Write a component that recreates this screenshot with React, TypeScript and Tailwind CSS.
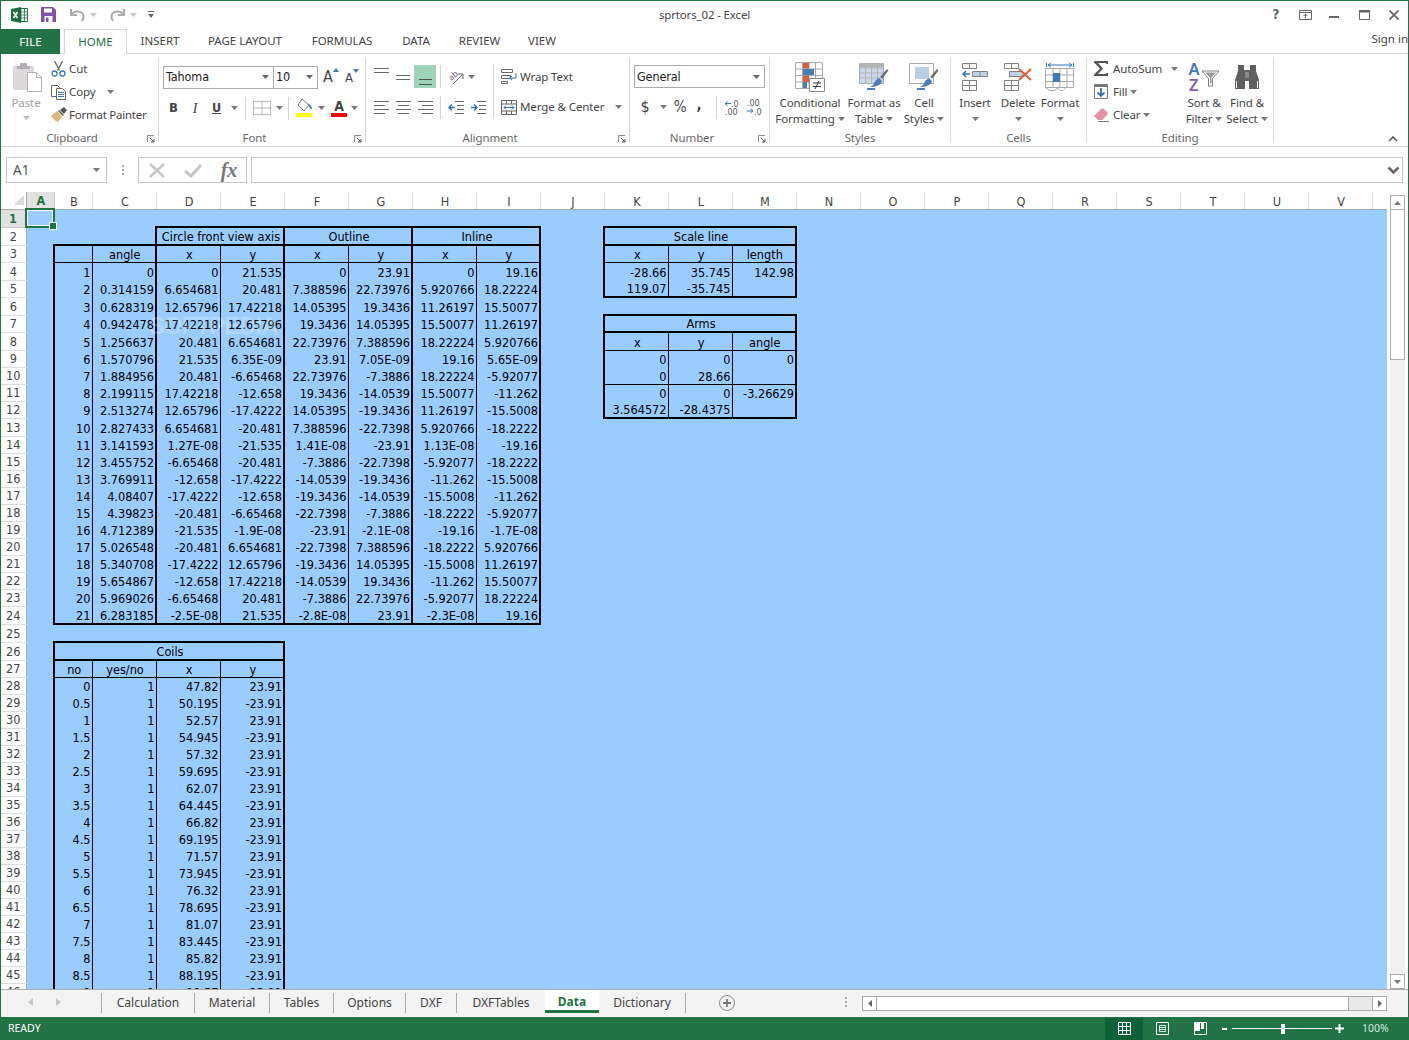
import React from 'react';

const COLS = ['A','B','C','D','E','F','G','H','I','J','K','L','M','N','O','P','Q','R','S','T','U','V','W'];
const HEIGHTS = [18,18,17,18,17,18,17,18,17,17,17,17,18,17,17,17,17,17,17,17,17,17,17,18,18,18,17,17,17,17,17,17,17,17,17,17,17,17,17,17,17,17,17,17,17,17];

type B = 0 | 1 | 2;
type Cell = { text?: string; span?: number; center?: boolean; t?: B; r?: B; b?: B; l?: B };
const cells: Record<string, Cell> = {};
const set = (c: string, r: number, v: Cell) => { cells[c + r] = v; };

const circle = `1|0|0|21.535|0|23.91|0|19.16
2|0.314159|6.654681|20.481|7.388596|22.73976|5.920766|18.22224
3|0.628319|12.65796|17.42218|14.05395|19.3436|11.26197|15.50077
4|0.942478|17.42218|12.65796|19.3436|14.05395|15.50077|11.26197
5|1.256637|20.481|6.654681|22.73976|7.388596|18.22224|5.920766
6|1.570796|21.535|6.35E-09|23.91|7.05E-09|19.16|5.65E-09
7|1.884956|20.481|-6.65468|22.73976|-7.3886|18.22224|-5.92077
8|2.199115|17.42218|-12.658|19.3436|-14.0539|15.50077|-11.262
9|2.513274|12.65796|-17.4222|14.05395|-19.3436|11.26197|-15.5008
10|2.827433|6.654681|-20.481|7.388596|-22.7398|5.920766|-18.2222
11|3.141593|1.27E-08|-21.535|1.41E-08|-23.91|1.13E-08|-19.16
12|3.455752|-6.65468|-20.481|-7.3886|-22.7398|-5.92077|-18.2222
13|3.769911|-12.658|-17.4222|-14.0539|-19.3436|-11.262|-15.5008
14|4.08407|-17.4222|-12.658|-19.3436|-14.0539|-15.5008|-11.262
15|4.39823|-20.481|-6.65468|-22.7398|-7.3886|-18.2222|-5.92077
16|4.712389|-21.535|-1.9E-08|-23.91|-2.1E-08|-19.16|-1.7E-08
17|5.026548|-20.481|6.654681|-22.7398|7.388596|-18.2222|5.920766
18|5.340708|-17.4222|12.65796|-19.3436|14.05395|-15.5008|11.26197
19|5.654867|-12.658|17.42218|-14.0539|19.3436|-11.262|15.50077
20|5.969026|-6.65468|20.481|-7.3886|22.73976|-5.92077|18.22224
21|6.283185|-2.5E-08|21.535|-2.8E-08|23.91|-2.3E-08|19.16`.split('\n').map(l => l.split('|'));

const T1 = ['B','C','D','E','F','G','H','I'];
const rightOf: Record<string, B> = { B: 1, C: 2, D: 1, E: 2, F: 1, G: 2, H: 1, I: 2 };
set('D', 2, { text: 'Circle front view axis', span: 2, center: true, t: 2, r: 2, b: 2, l: 2 });
set('F', 2, { text: 'Outline', span: 2, center: true, t: 2, r: 2, b: 2 });
set('H', 2, { text: 'Inline', span: 2, center: true, t: 2, r: 2, b: 2 });
['', 'angle', 'x', 'y', 'x', 'y', 'x', 'y'].forEach((h, i) => {
  const c = T1[i];
  set(c, 3, { text: h, center: true, t: 2, b: 1, r: rightOf[c], l: c === 'B' ? 2 : 0 });
});
circle.forEach((row, ri) => {
  row.forEach((v, i) => {
    const c = T1[i];
    set(c, 4 + ri, { text: v, r: rightOf[c], l: c === 'B' ? 2 : 0, b: ri === 20 ? 2 : 0 });
  });
});

set('B', 26, { text: 'Coils', span: 4, center: true, t: 2, b: 2, l: 2, r: 2 });
['no', 'yes/no', 'x', 'y'].forEach((h, i) => {
  const c = ['B', 'C', 'D', 'E'][i];
  set(c, 27, { text: h, center: true, b: 1, l: i === 0 ? 2 : 0, r: i === 3 ? 2 : 1 });
});
for (let k = 0; k <= 18; k++) {
  const r = 28 + k;
  const vals = [String(k / 2), '1', String(+(47.82 + 2.375 * k).toFixed(3)), k % 2 ? '-23.91' : '23.91'];
  vals.forEach((v, i) => {
    const c = ['B', 'C', 'D', 'E'][i];
    set(c, r, { text: v, l: i === 0 ? 2 : 0, r: i === 3 ? 2 : 1 });
  });
}

const small = (top: number, title: string, heads: string[], rows: string[][], thinAfter: number[]) => {
  set('K', top, { text: title, span: 3, center: true, t: 2, b: 2, l: 2, r: 2 });
  const cs = ['K', 'L', 'M'];
  heads.forEach((h, i) => set(cs[i], top + 1, { text: h, center: true, b: 1, l: i === 0 ? 2 : 0, r: i === 2 ? 2 : 1 }));
  rows.forEach((row, ri) => row.forEach((v, i) => set(cs[i], top + 2 + ri, {
    text: v,
    l: i === 0 ? 2 : 0,
    r: i === 2 ? 2 : 1,
    b: ri === rows.length - 1 ? 2 : thinAfter.includes(ri) ? 1 : 0,
  })));
};
small(2, 'Scale line', ['x', 'y', 'length'], [['-28.66', '35.745', '142.98'], ['119.07', '-35.745', '']], []);
small(7, 'Arms', ['x', 'y', 'angle'], [['0', '0', '0'], ['0', '28.66', ''], ['0', '0', '-3.26629'], ['3.564572', '-28.4375', '']], [1]);

const BT = { 0: '', 1: 'border-t border-t-black', 2: 'border-t-2 border-t-black' };
const BR = { 0: '', 1: 'border-r border-r-black', 2: 'border-r-2 border-r-black' };
const BB = { 0: '', 1: 'border-b border-b-black', 2: 'border-b-2 border-b-black' };
const BL = { 0: '', 1: 'border-l border-l-black', 2: 'border-l-2 border-l-black' };

const UI = "font-['Noto_Sans',sans-serif]";
const SHEET = "font-['DejaVu_Sans_Condensed','DejaVu_Sans',sans-serif]";

const Caret = ({ c = '#777' }: { c?: string }) => (
  <svg width="7" height="4" viewBox="0 0 7 4" className="shrink-0"><path d="M0 0h7L3.5 4z" fill={c} /></svg>
);

const Lines = ({ w = 15, h = 16, ys, c = '#666' }: { w?: number; h?: number; ys: [number, number, number][]; c?: string }) => (
  <svg width={w} height={h} viewBox={`0 0 ${w} ${h}`}>
    {ys.map(([x1, x2, y], i) => <path key={i} d={`M${x1} ${y + 0.5}H${x2}`} stroke={c} />)}
  </svg>
);

const Launcher = () => (
  <svg width="8" height="8" viewBox="0 0 8 8" className="shrink-0">
    <path d="M.5 7V.5H7" stroke="#8a8a8a" fill="none" />
    <path d="M3 3l4 4M7 4v3H4" stroke="#555" fill="none" />
  </svg>
);

function Group({ w, label, launcher, children }: { w: string; label: string; launcher?: boolean; children: React.ReactNode }) {
  return (
    <div className={`${w} h-[84px] mt-[4px] border-r border-[#d4d4d4] flex flex-col shrink-0`}>
      <div className="h-[74px] flex">{children}</div>
      <div className={`h-[10px] flex text-[11.5px] tracking-[-0.1px] leading-[12px] text-[#666] ${launcher ? 'pr-[3px]' : ''}`}>
        <div className={`flex-1 text-center ${launcher ? 'pr-[4px]' : ''}`}>{label}</div>
        {launcher && <div className="pt-[3px]"><Launcher /></div>}
      </div>
    </div>
  );
}

const Combo = ({ w, text, cls = '' }: { w: string; text: string; cls?: string }) => (
  <div className={`${w} h-[23px] border border-[#ababab] bg-white flex items-center justify-between pl-[2px] pr-[4px] ${cls}`}>
    <span className={`${SHEET} pt-[1px] text-[12.5px] text-[#222]`}>{text}</span>
    <Caret c="#666" />
  </div>
);

const Slot = ({ w, children, cls = '' }: { w: string; children?: React.ReactNode; cls?: string }) => (
  <span className={`${w} h-full flex items-center justify-center shrink-0 ${cls}`}>{children}</span>
);

const Sep = ({ cls = 'h-[23px]' }: { cls?: string }) => <span className={`w-px ${cls} bg-[#d4d4d4] shrink-0`} />;

const Big = ({ w, icon, l1, l2, caret }: { w: string; icon: React.ReactNode; l1: string; l2?: string; caret?: boolean }) => (
  <div className={`${w} flex flex-col items-center pt-[4px] shrink-0`}>
    <div className="h-[30px] flex items-center justify-center">{icon}</div>
    <div className="mt-[3px] h-[16px] leading-[16px] whitespace-nowrap">{l1}</div>
    {l2 ? (
      <div className="h-[16px] leading-[16px] whitespace-nowrap flex items-center gap-[3px]">{l2}{caret && <Caret />}</div>
    ) : (
      <div className="h-[16px] flex items-center"><Caret /></div>
    )}
  </div>
);

const CondIcon = () => (
  <svg width="30" height="30" viewBox="0 0 30 30">
    <path d="M.5.5h27v26H.5zM.5 7h27M.5 13.5h27M.5 20h27M7.5.5v26M14 .5v26M20.5.5v26" fill="#fff" stroke="#a9a9a9" />
    <path d="M8 1h6v5.5H8zM8 13.5h6V20H8z" fill="#d8603f" />
    <path d="M8 7h11v6H8zM8 20h4v6H8z" fill="#4a7ebb" />
    <path d="M14.5 16.5h15v13h-15z" fill="#fff" stroke="#8a8a8a" />
    <path d="M18 21h8M18 24.5h8M24 19l-4 8" stroke="#333" fill="none" />
  </svg>
);
const TableBrush = ({ full }: { full?: boolean }) => (
  <svg width="30" height="30" viewBox="0 0 30 30">
    {full ? (
      <>
        <path d="M.5 1.5h24v20H.5z" fill="#fff" stroke="#a9a9a9" />
        <path d="M6 5h14v12H6z" fill="#b9cde5" />
      </>
    ) : (
      <>
        <path d="M.5 1.5h24v20H.5z" fill="#c9d8ea" stroke="#a9a9a9" />
        <path d="M1 1.5h23v4H1z" fill="#b4b4b4" />
        <path d="M.5 6h24M.5 11h24M.5 16h24M6.5 1.5v20M12.5 1.5v20M18.5 1.5v20" stroke="#b5b5b5" />
      </>
    )}
    <path d="M21 15l7-8 1.500 1.500-6 8z" fill="#707070" />
    <path d="M16 19l4-3 3 3c-1 4-6 6-12 6 3-1 4-3 5-6z" fill="#4a7ebb" />
    <path d="M8 27h8" stroke="#4a7ebb" strokeWidth="2" />
  </svg>
);
const InsertIcon = () => (
  <svg width="28" height="30" viewBox="0 0 28 30">
    <path d="M1.500 1.500h14v5h-14zM8.500 1.500v5M1.500 18.500h14v10h-14zM1.500 23.500h14M8.500 18.500v10" fill="#fff" stroke="#808080" />
    <path d="M11.500 9.500h15v5h-15z" fill="#c0d2e8" stroke="#808080" />
    <path d="M19 9.500v5" stroke="#808080" />
    <path d="M9 12H2M5 9l-3 3 3 3" stroke="#2f75b5" strokeWidth="1.500" fill="none" />
  </svg>
);
const DeleteIcon = () => (
  <svg width="30" height="30" viewBox="0 0 30 30">
    <path d="M1.500 1.500h14v5h-14zM8.500 1.500v5M1.500 18.500h14v10h-14zM1.500 23.500h14M8.500 18.500v10" fill="#fff" stroke="#808080" />
    <path d="M6.500 9.500h12l3 2.500-3 2.500h-12z" fill="#c0d2e8" stroke="#808080" />
    <path d="M16 7l12 11M28 7L16 18" stroke="#e0623f" strokeWidth="2.200" />
  </svg>
);
const FormatIcon = () => (
  <svg width="30" height="30" viewBox="0 0 30 30">
    <path d="M1.500 1v4M28.500 1v4M3 3h24" stroke="#2f75b5" fill="none" />
    <path d="M6 1L3 3l3 2M24 1l3 2-3 2" stroke="#2f75b5" fill="none" />
    <path d="M.5 6.500h28v19H.5zM.5 13h28M.5 19.500h28M8 6.500v19M15 6.500v19M22 6.500v19" fill="#fff" stroke="#a9a9a9" />
    <path d="M8 11h7v9H8z" fill="#3f7ab8" />
    <path d="M.5 25.500l4 3h6l2-3M12 25.500l3 3h3l3-3" fill="none" stroke="#a9a9a9" />
  </svg>
);
const SortIcon = () => (
  <svg width="31" height="28" viewBox="0 0 31 28" className="overflow-visible">
    <text x="-.5" y="12" fontSize="16.500" fontFamily="Noto Sans" fontWeight="600" fill="#3f7ab8">A</text>
    <text x="0" y="27.500" fontSize="16.500" fontFamily="Noto Sans" fontWeight="600" fill="#8a5bb5">Z</text>
    <path d="M13 8h17l-6.500 7.500V23h-4v-7.500z" fill="#fff" stroke="#7f7f7f" />
    <path d="M16 9.500h11l-4.500 5v6h-1.500v-6z" fill="#9a9a9a" />
  </svg>
);
const Binoculars = () => (
  <svg width="28" height="26" viewBox="0 0 28 26">
    <path d="M5 1h6v5h6V1h6v6l3 9v9h-10v-8h-4v8H2v-9l3-9z" fill="#5f5f5f" />
    <path d="M3.500 17v7M24.500 17v7" stroke="#fff" />
    <path d="M12 8h4v6h-4z" fill="#888" />
  </svg>
);

const Ribbon = () => (
  <div className="h-[93px] border-b border-[#d4d4d4] flex text-[11.5px] tracking-[-0.1px] text-[#444] shrink-0">
    <Group w="w-[158px]" label="Clipboard" launcher>
      <div className="w-[50px] flex flex-col items-center pt-[4px] text-[#a0a0a0]">
        <svg width="30" height="30" viewBox="0 0 30 30" className="ml-[4px]">
          <rect x="0" y="4" width="21" height="24" rx="2" fill="#dcd8dc" />
          <path d="M7 4V1h7v3h3v3H4V4z" fill="#b3aeb3" />
          <path d="M14.500 10.500h9l5 5v14h-14z" fill="#fff" stroke="#b0b0b0" />
          <path d="M23.500 10.500v5h5" fill="none" stroke="#b0b0b0" />
        </svg>
        <div className="mt-[3px] h-[16px] leading-[16px]">Paste</div>
        <div className="mt-[5px]"><Caret c="#bbb" /></div>
      </div>
      <div className="-mt-px flex flex-col">
        <div className="h-[23px] flex items-center gap-[3px]">
          <svg width="15" height="16" viewBox="0 0 15 16">
            <path d="M3.500 0l5 9.500M11.500 0l-5 9.500" stroke="#666" strokeWidth="1.300" />
            <circle cx="3.500" cy="12.500" r="2.500" fill="none" stroke="#3f7ab8" strokeWidth="1.300" />
            <circle cx="11.500" cy="12.500" r="2.500" fill="none" stroke="#3f7ab8" strokeWidth="1.300" />
          </svg>
          <span>Cut</span>
        </div>
        <div className="h-[23px] flex items-center gap-[3px]">
          <svg width="15" height="16" viewBox="0 0 15 16">
            <path d="M.5 1.500h6l2 2v9h-8z" fill="#fff" stroke="#666" />
            <path d="M5.500 4.500h6l3 3v8h-9z" fill="#fff" stroke="#666" />
            <path d="M7 8.500h6M7 10.500h6M7 12.500h6" stroke="#3f7ab8" />
          </svg>
          <span>Copy</span>
          <span className="ml-[8px]"><Caret /></span>
        </div>
        <div className="h-[23px] flex items-center gap-[2px]">
          <svg width="16" height="16" viewBox="0 0 16 16">
            <path d="M0 9l6-5 5 5-4 6c-3-1-5-3-7-6z" fill="#dcb67a" />
            <path d="M7 4l1-1 5 5-1 1zM9 3l4-3 3 3-3 4z" fill="#555" />
          </svg>
          <span className="tracking-[-0.25px]">Format Painter</span>
        </div>
      </div>
    </Group>

    <Group w="w-[207px]" label="Font" launcher>
      <div className="pl-[4px] pt-[7px] flex flex-col">
        <div className="flex items-center">
          <Combo w="w-[111px]" text="Tahoma" />
          <Combo w="w-[44px]" text="10" cls="border-l-0" />
          <span className="w-[5px]" />
          <span className={`${SHEET} w-[22px] flex items-start text-[16px] text-[#444]`}>A<svg width="6" height="4" viewBox="0 0 6 4" className="mt-[3px]"><path d="M3 0l3 4H0z" fill="#3f7ab8" /></svg></span>
          <span className={`${SHEET} w-[18px] flex items-start text-[13px] pt-[2px] text-[#444]`}>A<svg width="6" height="4" viewBox="0 0 6 4" className="mt-[1px]"><path d="M0 0h6L3 4z" fill="#3f7ab8" /></svg></span>
        </div>
        <div className="mt-[7px] h-[24px] flex items-center text-[#444]">
          <Slot w="w-[21px]"><span className={`${SHEET} font-bold text-[13px]`}>B</span></Slot>
          <Slot w="w-[22px]"><span className="font-['Liberation_Serif',serif] italic text-[14px]">I</span></Slot>
          <Slot w="w-[21px]"><span className={`${SHEET} font-bold text-[12.5px] underline`}>U</span></Slot>
          <Slot w="w-[14px]"><Caret /></Slot>
          <span className="w-[4px]" />
          <Sep />
          <span className="w-[7px]" />
          <svg width="18" height="14" viewBox="0 0 18 14">
            <path d="M.5.5h17v13H.5z" fill="none" stroke="#777" strokeDasharray="1 1" />
            <path d="M9 .5v13M.5 7h17" stroke="#777" strokeDasharray="1 1" />
          </svg>
          <Slot w="w-[17px]"><Caret /></Slot>
          <Sep />
          <span className="w-[7px]" />
          <svg width="17" height="18" viewBox="0 0 17 18">
            <path d="M6 0l7 6-5 6-6-6z" fill="#fff" stroke="#777" />
            <path d="M13 5c2 1 3 3 3 5-2 0-3-1-3-5z" fill="#3f7ab8" />
            <path d="M0 14h16v4H0z" fill="#ffff00" />
          </svg>
          <Slot w="w-[17px]"><Caret /></Slot>
          <span className="w-[1px]" />
          <span className="w-[16px] flex flex-col items-center">
            <span className={`${SHEET} text-[14px] font-bold leading-[14px] text-[#444]`}>A</span>
            <span className="w-[16px] h-[4px] bg-[#ff0000]" />
          </span>
          <Slot w="w-[15px]"><Caret /></Slot>
        </div>
      </div>
    </Group>

    <Group w="w-[264px]" label="Alignment" launcher>
      <div className="w-[127px] pt-[7px] pl-[4px] shrink-0">
        <div className="h-[23px] flex items-center">
          <Slot w="w-[22px]"><Lines ys={[[0, 15, 2], [0, 15, 6]]} h={22} /></Slot>
          <Slot w="w-[22px]"><Lines ys={[[0, 14, 9], [0, 14, 13]]} h={22} /></Slot>
          <Slot w="w-[22px]" cls="bg-[#9fd5b7]"><Lines ys={[[1, 14, 13], [1, 14, 18]]} h={22} c="#555" /></Slot>
          <span className="w-[4px]" />
          <Sep />
          <span className="w-[8px]" />
          <svg width="16" height="16" viewBox="0 0 16 16" className="overflow-visible">
            <text x="0" y="10" fontSize="8.500" fontFamily="Noto Sans" fill="#6b5a7a" transform="rotate(-40 4 8)">ab</text>
            <path d="M4 15L14 5M14 5v5M14 5H9" stroke="#666" fill="none" />
          </svg>
          <Slot w="w-[12px]"><Caret /></Slot>
        </div>
        <div className="mt-[7px] h-[24px] flex items-center">
          <Slot w="w-[22px]"><Lines ys={[[0, 15, 2], [0, 11, 6], [0, 15, 10], [0, 11, 14]]} /></Slot>
          <Slot w="w-[22px]"><Lines ys={[[0, 15, 2], [2, 13, 6], [0, 15, 10], [2, 13, 14]]} /></Slot>
          <Slot w="w-[22px]"><Lines ys={[[0, 15, 2], [4, 15, 6], [0, 15, 10], [4, 15, 14]]} /></Slot>
          <span className="w-[4px]" />
          <Sep />
          <span className="w-[7px]" />
          <svg width="16" height="14" viewBox="0 0 16 14">
            <path d="M7 1.500h9M9 5.500h7M9 9.500h7M7 13.500h9" stroke="#666" />
            <path d="M7 7.500H1M4 4.500l-3 3 3 3" stroke="#2f75b5" strokeWidth="1.500" fill="none" />
          </svg>
          <span className="w-[6px]" />
          <svg width="16" height="14" viewBox="0 0 16 14">
            <path d="M7 1.500h9M9 5.500h7M9 9.500h7M7 13.500h9" stroke="#666" />
            <path d="M1 7.500h6M4 4.500l3 3-3 3" stroke="#2f75b5" strokeWidth="1.500" fill="none" />
          </svg>
        </div>
      </div>
      <div className="mt-[6px] w-px h-[54px] bg-[#d4d4d4] shrink-0" />
      <div className="pl-[7px] pt-[7px] flex flex-col">
        <div className="h-[23px] flex items-center gap-[3px]">
          <svg width="16" height="15" viewBox="0 0 16 15">
            <path d="M.5.5h11v3H.5zM.5 6.500h9v3H.5zM.5 12.500h6v2h-6z" fill="#fff" stroke="#666" />
            <path d="M15 4v5h-6M11 7L8.500 9l2.500 2" stroke="#2f75b5" fill="none" />
          </svg>
          <span>Wrap Text</span>
        </div>
        <div className="mt-[7px] h-[24px] flex items-center gap-[3px]">
          <svg width="16" height="15" viewBox="0 0 16 15">
            <path d="M.5.5h15v14H.5zM.5 4h15M.5 11h15M5.500.5V4M10.500.5V4M5.500 11v3.500M10.500 11v3.500" fill="#fff" stroke="#666" />
            <path d="M3 7.500h10M5 5.500l-2 2 2 2M11 5.500l2 2-2 2" stroke="#2f75b5" fill="none" />
          </svg>
          <span>Merge &amp; Center</span>
          <span className="ml-[8px]"><Caret /></span>
        </div>
      </div>
    </Group>

    <Group w="w-[140px]" label="Number" launcher>
      <div className="pl-[4px] pt-[7px] flex flex-col">
        <Combo w="w-[131px]" text="General" />
        <div className="mt-[7px] h-[24px] flex items-center text-[16px]">
          <Slot w="w-[22px]"><span className={SHEET}>$</span></Slot>
          <Slot w="w-[14px]"><Caret /></Slot>
          <Slot w="w-[20px]"><span className={`${SHEET} text-[15px]`}>%</span></Slot>
          <Slot w="w-[18px]"><span className={`${SHEET} font-bold text-[15px] -mt-[4px]`}>,</span></Slot>
          <span className="w-[8px]" />
          <Sep />
          <span className="w-[7px]" />
          <svg width="15" height="15" viewBox="0 0 15 15" className="overflow-visible">
            <path d="M7 3.500H1M3.500 1.500L1 3.500l2.500 2" stroke="#2f75b5" fill="none" />
            <text x="7" y="7" fontSize="8" fill="#555" fontFamily="DejaVu Sans">.0</text>
            <text x="1" y="14.500" fontSize="8" fill="#555" fontFamily="DejaVu Sans">.00</text>
          </svg>
          <span className="w-[7px]" />
          <svg width="15" height="15" viewBox="0 0 15 15" className="overflow-visible">
            <text x="1" y="6" fontSize="8" fill="#555" fontFamily="DejaVu Sans">.00</text>
            <path d="M1 11h6M4.500 9L7 11l-2.500 2" stroke="#2f75b5" fill="none" />
            <text x="8" y="14.500" fontSize="8" fill="#555" fontFamily="DejaVu Sans">.0</text>
          </svg>
        </div>
      </div>
    </Group>

    <Group w="w-[181px]" label="Styles">
      <Big w="w-[80px]" icon={<CondIcon />} l1="Conditional" l2="Formatting" caret />
      <Big w="w-[48px]" icon={<TableBrush />} l1="Format as" l2="Table" caret />
      <Big w="w-[52px]" icon={<TableBrush full />} l1="Cell" l2="Styles" caret />
    </Group>

    <Group w="w-[136px]" label="Cells">
      <Big w="w-[48px]" icon={<InsertIcon />} l1="Insert" />
      <Big w="w-[38px]" icon={<DeleteIcon />} l1="Delete" />
      <Big w="w-[46px]" icon={<FormatIcon />} l1="Format" />
    </Group>

    <Group w="w-[187px]" label="Editing">
      <div className="w-[95px] -mt-px flex flex-col pl-[7px] shrink-0">
        <div className="h-[23px] flex items-center">
          <Slot w="w-[19px]" cls="justify-start">
            <svg width="15" height="15" viewBox="0 0 15 15"><path d="M0 0h14v3h-2V2H4l5 5.500L4 13h8v-1h2v3H0v-1.500L6 7.500 0 1.500z" fill="#555" /></svg>
          </Slot>
          <span>AutoSum</span>
          <span className="ml-[9px]"><Caret /></span>
        </div>
        <div className="h-[23px] flex items-center">
          <Slot w="w-[19px]" cls="justify-start">
            <svg width="14" height="15" viewBox="0 0 14 15">
              <path d="M.5.5h13v14H.5z" fill="#fff" stroke="#777" />
              <path d="M1 1h12v2H1z" fill="#777" />
              <path d="M7 4v8M3.500 8.500L7 12l3.500-3.500" stroke="#2f75b5" strokeWidth="1.800" fill="none" />
            </svg>
          </Slot>
          <span>Fill</span>
          <span className="ml-[3px]"><Caret /></span>
        </div>
        <div className="h-[23px] flex items-center">
          <Slot w="w-[19px]" cls="justify-start">
            <svg width="15" height="14" viewBox="0 0 15 14">
              <path d="M0 8l7-7c1-1 2-1 3 0l3 3c1 1 1 2 0 3l-5 5H4z" fill="#e88fa0" />
              <path d="M4 13.500h11" stroke="#777" />
            </svg>
          </Slot>
          <span>Clear</span>
          <span className="ml-[3px]"><Caret /></span>
        </div>
      </div>
      <Big w="w-[44px]" icon={<SortIcon />} l1="Sort &" l2="Filter" caret />
      <Big w="w-[42px]" icon={<Binoculars />} l1="Find &" l2="Select" caret />
    </Group>

    <div className="flex-1 flex items-end justify-end pr-[10px] pb-[4px]">
      <svg width="10" height="6" viewBox="0 0 10 6"><path d="M1 5l4-4 4 4" stroke="#555" strokeWidth="1.600" fill="none" /></svg>
    </div>
  </div>
);

const TitleBar = () => (
  <div className="h-[28px] pb-px grid grid-cols-[1fr_auto_1fr] items-center shrink-0">
    <div className="flex items-center pl-[10px]">
      <svg width="17" height="16" viewBox="0 0 17 16">
        <path d="M6 1.500h10.500v13H6z" fill="#fff" stroke="#217346" />
        <path d="M10 2v12M13.500 2v12M6 5h10M6 8h10M6 11h10" stroke="#217346" strokeWidth=".8" />
        <path d="M0 2l10-2v16L0 14z" fill="#1e6e42" />
        <path d="M2.500 5l4 6M6.500 5l-4 6" stroke="#fff" strokeWidth="1.500" />
      </svg>
      <span className="w-[13px]" />
      <svg width="15" height="15" viewBox="0 0 15 15">
        <path d="M0 0h12l3 3v12H0z" fill="#7f52a8" />
        <path d="M3 1.500h8v4H3z" fill="#fff" />
        <path d="M3.500 9h8v6h-8z" fill="#fff" />
        <path d="M5 10.500h2.500V15H5z" fill="#7f52a8" />
      </svg>
      <span className="w-[14px]" />
      <svg width="15" height="14" viewBox="0 0 15 14">
        <path d="M1 1v6h6" fill="none" stroke="#ababab" strokeWidth="2" />
        <path d="M1.500 6.500C4 3 9 2.500 12 5c2 2 2 5 0 8" fill="none" stroke="#ababab" strokeWidth="2" />
      </svg>
      <span className="ml-[5px]"><Caret c="#c6c6c6" /></span>
      <span className="w-[13px]" />
      <svg width="15" height="14" viewBox="0 0 15 14">
        <path d="M14 1v6H8" fill="none" stroke="#ababab" strokeWidth="2" />
        <path d="M13.500 6.500C11 3 6 2.500 3 5c-2 2-2 5 0 8" fill="none" stroke="#ababab" strokeWidth="2" />
      </svg>
      <span className="ml-[5px]"><Caret c="#c6c6c6" /></span>
      <span className="w-[11px]" />
      <svg width="6" height="7" viewBox="0 0 6 7"><path d="M0 .5h6" stroke="#666" /><path d="M0 3h6L3 7z" fill="#666" /></svg>
    </div>
    <div className={`${UI} text-[11.5px] tracking-[-0.15px] text-[#444]`}>sprtors_02 - Excel</div>
    <div className="flex items-center justify-end">
      <span className={`${SHEET} font-bold text-[14px] text-[#666] w-[10px] text-center`}>?</span>
      <span className="w-[18px]" />
      <svg width="13" height="10" viewBox="0 0 13 10">
        <path d="M.5.5h12v9H.5zM.5 2.500h12" fill="none" stroke="#666" />
        <path d="M6.500 8V4M4.500 6l2-2 2 2" fill="none" stroke="#666" />
      </svg>
      <span className="w-[17px]" />
      <span className="w-[10px] h-[2px] mt-[4px] bg-[#666]" />
      <span className="w-[20px]" />
      <svg width="11" height="10" viewBox="0 0 11 10"><path d="M.5.5h10v9H.5z" fill="none" stroke="#666" /><path d="M0 0h11v2.500H0z" fill="#666" /></svg>
      <span className="w-[19px]" />
      <svg width="10" height="10" viewBox="0 0 10 10"><path d="M.5.5l9 9M9.500.5l-9 9" stroke="#666" strokeWidth="1.800" /></svg>
      <span className="w-[9px]" />
    </div>
  </div>
);

const TabRow = () => (
  <div className={`${UI} h-[25px] flex items-stretch text-[11.5px] text-[#444] border-b border-[#d4d4d4] shrink-0`}>
    <div className="w-[59px] h-[25px] bg-[#217346] text-white flex items-center justify-center">FILE</div>
    <div className="w-[4px]" />
    <div className="w-[63px] h-[25px] bg-white border border-b-0 border-[#d4d4d4] text-[#217346] flex items-center justify-center">HOME</div>
    <div className="w-[66px] flex items-center justify-center">INSERT</div>
    <div className="w-[104px] flex items-center justify-center">PAGE LAYOUT</div>
    <div className="w-[90px] flex items-center justify-center">FORMULAS</div>
    <div className="w-[58px] flex items-center justify-center">DATA</div>
    <div className="w-[69px] flex items-center justify-center">REVIEW</div>
    <div className="w-[56px] flex items-center justify-center">VIEW</div>
    <div className="flex-1 flex items-center justify-end pb-[5px] whitespace-nowrap overflow-hidden">Sign in</div>
  </div>
);

const FormulaBar = () => (
  <div className={`${UI} h-[45px] pt-[10px] flex items-start shrink-0 text-[#444]`}>
    <div className="ml-[5px] w-[101px] h-[26px] border border-[#c6c6c6] flex items-center justify-between pl-[6px] pr-[6px] text-[13.5px] text-[#555]">
      <span className="pt-px">A1</span>
      <Caret c="#777" />
    </div>
    <div className="w-[31px] h-[26px] flex flex-col items-center justify-center gap-[2px]">
      <span className="w-[2px] h-[2px] bg-[#aaa]" />
      <span className="w-[2px] h-[2px] bg-[#aaa]" />
      <span className="w-[2px] h-[2px] bg-[#aaa]" />
    </div>
    <div className="w-[109px] h-[26px] border border-[#c6c6c6] flex items-center">
      <Slot w="w-[36px]">
        <svg width="16" height="15" viewBox="0 0 16 15"><path d="M1 1l14 13M15 1L1 14" stroke="#c6c6c6" strokeWidth="2.400" /></svg>
      </Slot>
      <Slot w="w-[36px]">
        <svg width="18" height="15" viewBox="0 0 18 15"><path d="M1 8l6 5L17 2" stroke="#c6c6c6" strokeWidth="3" fill="none" /></svg>
      </Slot>
      <Slot w="w-[36px]"><span className="font-['Liberation_Serif',serif] italic text-[20px] text-[#777] font-bold">fx</span></Slot>
    </div>
    <div className="ml-[4px] w-[1152px] h-[26px] border border-[#c6c6c6] flex items-center justify-end pr-[2px]">
      <svg width="13" height="9" viewBox="0 0 13 9"><path d="M1.500 1.500l5 5 5-5" stroke="#666" strokeWidth="2.600" fill="none" /></svg>
    </div>
  </div>
);

const Sheet = () => (
  <div className="relative w-[1386px] shrink-0 overflow-hidden">
    <table className={`${SHEET} table-fixed border-collapse w-[1386px] text-[12.6px] leading-[15px] text-black`}>
      <colgroup>
        <col className="w-[25px]" />
        {COLS.map(c => <col key={c} className={c === 'A' ? 'w-[28px]' : c === 'B' ? 'w-[38px]' : c === 'W' ? 'w-[15px]' : 'w-[64px]'} />)}
      </colgroup>
      <thead>
        <tr className="h-[17px]">
          <th className="p-0 bg-white border-b border-b-[#ababab] border-r border-r-[#ababab] align-middle">
            <div className="flex justify-end pr-[2px]">
              <svg width="10" height="10" viewBox="0 0 10 10"><path d="M10 0v10H0z" fill="#dcdcdc" /></svg>
            </div>
          </th>
          {COLS.map(c => (
            <th key={c} className={c === 'A'
              ? 'p-0 pl-[2px] align-bottom font-bold bg-[#e1e1e1] text-[#217346] border-b-2 border-b-[#217346] border-r border-r-[#c6c6c6]'
              : 'p-0 pl-[2px] align-bottom font-normal bg-white text-[#444] border-b border-b-[#ababab] border-r border-r-[#dcdcdc]'}>{c === 'W' ? '' : c}</th>
          ))}
        </tr>
      </thead>
      <tbody className="bg-[#99ccff]">
        {HEIGHTS.map((h, i) => {
          const r = i + 1;
          const out: React.ReactNode[] = [];
          let skip = 0;
          COLS.forEach(c => {
            if (skip > 0) { skip--; return; }
            const v = cells[c + r];
            if (!v) { out.push(<td key={c} className="p-0" />); return; }
            if (v.span) skip = v.span - 1;
            out.push(
              <td key={c} colSpan={v.span} className={`p-0 align-bottom whitespace-nowrap overflow-hidden ${v.center ? 'text-center pl-[2px]' : 'text-right pr-[1px]'} ${BT[v.t ?? 0]} ${BR[v.r ?? 0]} ${BB[v.b ?? 0]} ${BL[v.l ?? 0]}`}>{v.text}</td>
            );
          });
          return (
            <tr key={r} style={{ height: h }}>
              <th className={r === 1
                ? 'p-0 font-bold text-center bg-[#e1e1e1] text-[#217346] border-b border-b-[#c6c6c6] border-r-2 border-r-[#217346]'
                : 'p-0 font-normal text-center bg-white text-[#444] border-b border-b-[#dcdcdc] border-r border-r-[#ababab]'}>{r}</th>
              {out}
            </tr>
          );
        })}
      </tbody>
    </table>
    <div className="absolute left-[24px] top-[16px] w-[30px] h-[20px] border-2 border-[#217346] shadow-[inset_0_0_0_1px_#ffffff]">
      <div className="absolute -right-[3px] -bottom-[3px] w-[6px] h-[6px] bg-[#217346] outline outline-1 outline-white" />
    </div>
    <div className="absolute left-[148px] top-[119px] font-['Liberation_Sans',sans-serif] font-bold text-[24px] leading-[30px] tracking-[-1px] text-white/25 pointer-events-none">SOFTPEDIA</div>
  </div>
);

const VScroll = () => (
  <div className="flex-1 flex flex-col pt-[3px] pl-[3px] pr-[3px]">
    <div className="w-[15px] h-[15px] border border-[#ababab] flex items-center justify-center bg-white">
      <svg width="7" height="4" viewBox="0 0 7 4"><path d="M3.500 0L7 4H0z" fill="#777" /></svg>
    </div>
    <div className="w-[15px] h-[150px] border border-[#ababab] border-t-0 bg-white" />
    <div className="w-[15px] flex-1 bg-[#f0f0f0]" />
    <div className="w-[15px] h-[15px] border border-[#ababab] flex items-center justify-center bg-white">
      <Caret />
    </div>
  </div>
);

const TABS: [string, string][] = [
  ['Calculation', 'w-[93px]'], ['Material', 'w-[75px]'], ['Tables', 'w-[64px]'], ['Options', 'w-[72px]'],
  ['DXF', 'w-[51px]'], ['DXFTables', 'w-[89px]'],
];

const SheetTabs = () => (
  <div className={`${UI} h-[28px] bg-[#f3f3f3] border-t border-[#ababab] flex text-[12px] text-[#444] shrink-0`}>
    <div className="w-[100px] flex items-center pl-[27px] gap-[23px] h-[24px] shrink-0">
      <svg width="5" height="8" viewBox="0 0 5 8"><path d="M5 0v8L0 4z" fill="#c6c6c6" /></svg>
      <svg width="5" height="8" viewBox="0 0 5 8"><path d="M0 0v8l5-4z" fill="#c6c6c6" /></svg>
    </div>
    <div className="flex h-[23px] shrink-0">
      {TABS.map(([t, w]) => (
        <div key={t} className={`${w} mt-[3px] h-[20px] border-l border-[#ababab] flex items-center justify-center`}>{t}</div>
      ))}
      <div className="w-[54px] h-[23px] pt-[3px] bg-white border-b-[3px] border-[#217346] text-[#217346] font-bold flex items-center justify-center">Data</div>
      <div className="w-[87px] mt-[3px] h-[20px] border-r border-[#ababab] flex items-center justify-center">Dictionary</div>
    </div>
    <div className="w-[32px]" />
    <svg width="18" height="18" viewBox="0 0 18 18" className="mt-[4px] shrink-0">
      <circle cx="9" cy="9" r="7.500" fill="none" stroke="#8a8a8a" />
      <path d="M9 5v8M5 9h8" stroke="#777" strokeWidth="1.800" />
    </svg>
    <div className="w-[109px]" />
    <div className="w-[17px] mt-[7px] flex flex-col gap-[2px] items-start">
      <span className="w-[2px] h-[2px] bg-[#aaa]" />
      <span className="w-[2px] h-[2px] bg-[#aaa]" />
      <span className="w-[2px] h-[2px] bg-[#aaa]" />
    </div>
    <div className="mt-[6px] h-[15px] w-[525px] border border-[#ababab] flex bg-[#e9e9e9] shrink-0">
      <div className="w-[14px] h-full bg-white border-r border-[#ababab] flex items-center justify-center">
        <svg width="4" height="7" viewBox="0 0 4 7"><path d="M4 0v7L0 3.500z" fill="#666" /></svg>
      </div>
      <div className="w-[472px] h-full bg-white border-r border-[#ababab]" />
      <div className="flex-1" />
      <div className="w-[14px] h-full bg-white border-l border-[#ababab] flex items-center justify-center">
        <svg width="4" height="7" viewBox="0 0 4 7"><path d="M0 0v7l4-3.500z" fill="#666" /></svg>
      </div>
    </div>
  </div>
);

const StatusBar = () => (
  <div className={`${UI} h-[23px] bg-[#217346] text-white text-[10.5px] flex items-center shrink-0`}>
    <span className="pl-[7px]">READY</span>
    <span className="flex-1" />
    <div className="w-[38px] h-[22px] bg-[#0f6137] flex items-center justify-center">
      <svg width="13" height="13" viewBox="0 0 13 13"><path d="M.5.5h12v12H.5zM.5 4.500h12M.5 8.500h12M4.500.5v12M8.500.5v12" fill="none" stroke="#fff" /></svg>
    </div>
    <div className="w-[38px] flex justify-center">
      <svg width="13" height="13" viewBox="0 0 13 13"><path d="M.5.5h12v12H.5z" fill="none" stroke="#fff" /><path d="M3.500 3.500h6v6h-6zM3.500 5.500h6M3.500 7.500h6" fill="none" stroke="#fff" strokeWidth=".8" /></svg>
    </div>
    <div className="w-[38px] flex justify-center">
      <svg width="13" height="13" viewBox="0 0 13 13"><path d="M.5.5h12v12H.5z" fill="none" stroke="#fff" /><path d="M1 1h5v8H1zM7 1h3v6H7z" fill="#fff" /></svg>
    </div>
    <span className="w-[3px]" />
    <span className="w-[5px] h-[2px] bg-white" />
    <span className="w-[5px]" />
    <div className="relative w-[100px] h-px bg-white flex items-center">
      <span className="absolute left-[49px] w-[4px] h-[10px] bg-white" />
    </div>
    <span className="w-[3px]" />
    <svg width="9" height="9" viewBox="0 0 9 9"><path d="M4.500 0v9M0 4.500h9" stroke="#fff" strokeWidth="2" /></svg>
    <span className="w-[18px]" />
    <span className="w-[30px] text-[#d9e8df]">100%</span>
    <span className="w-[16px]" />
  </div>
);

export default function App() {
  return (
    <div className="w-[1409px] h-[1040px] bg-white border-x border-t border-[#217346] flex flex-col overflow-hidden">
      <TitleBar />
      <TabRow />
      <div className={UI}><Ribbon /></div>
      <FormulaBar />
      <div className="flex-1 min-h-0 flex">
        <Sheet />
        <VScroll />
      </div>
      <SheetTabs />
      <StatusBar />
    </div>
  );
}
